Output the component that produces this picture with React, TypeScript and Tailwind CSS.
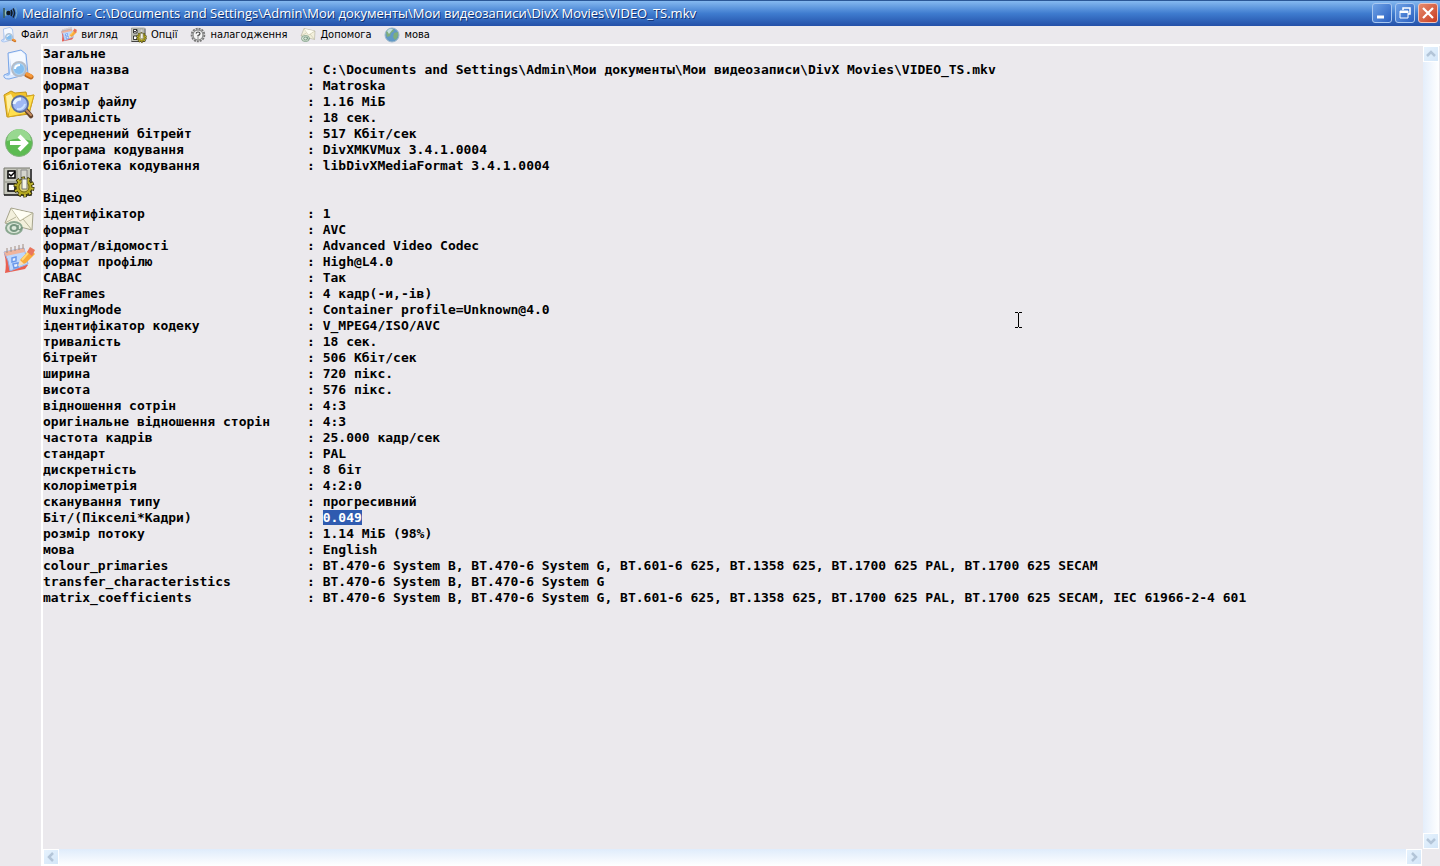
import type { ReactNode } from "react";

type Row = [label: string, value?: string];

const TITLE =
  "MediaInfo - C:\\Documents and Settings\\Admin\\Мои документы\\Мои видеозаписи\\DivX Movies\\VIDEO_TS.mkv";

const SELECTED = "Біт/(Пікселі*Кадри)";

const rows: Row[] = [
  ["Загальне"],
  ["повна назва", "C:\\Documents and Settings\\Admin\\Мои документы\\Мои видеозаписи\\DivX Movies\\VIDEO_TS.mkv"],
  ["формат", "Matroska"],
  ["розмір файлу", "1.16 МіБ"],
  ["тривалість", "18 сек."],
  ["усереднений бітрейт", "517 Кбіт/сек"],
  ["програма кодування", "DivXMKVMux 3.4.1.0004"],
  ["бібліотека кодування", "libDivXMediaFormat 3.4.1.0004"],
  [""],
  ["Відео"],
  ["ідентифікатор", "1"],
  ["формат", "AVC"],
  ["формат/відомості", "Advanced Video Codec"],
  ["формат профілю", "High@L4.0"],
  ["CABAC", "Так"],
  ["ReFrames", "4 кадр(-и,-ів)"],
  ["MuxingMode", "Container profile=Unknown@4.0"],
  ["ідентифікатор кодеку", "V_MPEG4/ISO/AVC"],
  ["тривалість", "18 сек."],
  ["бітрейт", "506 Кбіт/сек"],
  ["ширина", "720 пікс."],
  ["висота", "576 пікс."],
  ["відношення сотрін", "4:3"],
  ["оригінальне відношення сторін", "4:3"],
  ["частота кадрів", "25.000 кадр/сек"],
  ["стандарт", "PAL"],
  ["дискретність", "8 біт"],
  ["колоріметрія", "4:2:0"],
  ["сканування типу", "прогресивний"],
  [SELECTED, "0.049"],
  ["розмір потоку", "1.14 МіБ (98%)"],
  ["мова", "English"],
  ["colour_primaries", "BT.470-6 System B, BT.470-6 System G, BT.601-6 625, BT.1358 625, BT.1700 625 PAL, BT.1700 625 SECAM"],
  ["transfer_characteristics", "BT.470-6 System B, BT.470-6 System G"],
  ["matrix_coefficients", "BT.470-6 System B, BT.470-6 System G, BT.601-6 625, BT.1358 625, BT.1700 625 PAL, BT.1700 625 SECAM, IEC 61966-2-4 601"],
];

function FileIcon({ className }: { className: string }) {
  return (
    <svg viewBox="0 0 32 32" className={className} aria-hidden="true">
      <path d="M5 4 18 1l5 4 2 20-19 5Q0 30 1 26l5-2z" fill="#dceaff" stroke="#7ba6e6" />
      <path d="M6 5 18 2l4 4 1 17-15 3z" fill="#f5f9ff" />
      <path d="M2 26q4 2 5-1L8 9 6 25z" fill="#8fb8f2" />
      <path d="m24 26 4 2" stroke="#c06a1e" strokeWidth="5" strokeLinecap="round" />
      <path d="m24 25 4 2" stroke="#f6993a" strokeWidth="3.5" strokeLinecap="round" />
      <circle cx="16" cy="20" r="7" fill="#a9d3f6" stroke="#b4bcc8" strokeWidth="2" />
      <circle cx="16" cy="20" r="5" fill="#85bff0" />
      <path d="M12 20q0-4 5-4" stroke="#fff" strokeWidth="2" fill="none" />
    </svg>
  );
}

function FolderIcon({ className }: { className: string }) {
  return (
    <svg viewBox="0 0 32 32" className={className} aria-hidden="true">
      <path d="M1 7 8 3l4 2 11-1 1 4 7-1-5 19-22 3z" fill="#f2c32c" stroke="#c3951a" />
      <path d="m8 12 23-5-5 18-21 4z" fill="#ffe04e" stroke="#d6a722" />
      <path d="m3 8 5-2 2 4-5 16z" fill="#fff0a0" />
      <path d="m23 22 5 6" stroke="#65432c" strokeWidth="4.500" strokeLinecap="round" />
      <path d="m23 22 5 5" stroke="#c78f62" strokeWidth="2" strokeLinecap="round" />
      <circle cx="17" cy="16" r="8" fill="#9fb8f4" stroke="#5c709c" strokeWidth="1.8" />
      <path d="M11 16q1-5 7-5" stroke="#e8f3ff" strokeWidth="3" fill="none" />
      <path d="M14 21q6 1 8-5" stroke="#c9e0ff" strokeWidth="2" fill="none" />
    </svg>
  );
}

function ExportIcon({ className }: { className: string }) {
  return (
    <svg viewBox="0 0 32 32" className={className} aria-hidden="true">
      <circle cx="16" cy="16" r="13.5" fill="#5dbb52" stroke="#86b381" />
      <path d="M4 14a12 12 0 0 1 24 0q-12-5-24 0" fill="#98d890" />
      <path d="M7 16h15M16 9l7 7-7 7" stroke="#fff" strokeWidth="4" fill="none" />
    </svg>
  );
}

function OptionsIcon({ className }: { className: string }) {
  return (
    <svg viewBox="0 0 32 32" className={className} aria-hidden="true">
      <path d="M1 2h26v27H1z" fill="#c6c7bd" />
      <path d="M1 29V2h26" fill="none" stroke="#77786e" />
      <path d="M1 29h27V3" fill="none" stroke="#111" strokeWidth="1.5" />
      <path d="M14 3v25M2 16h24" stroke="#8b8c83" />
      <path d="M5 5h7v7H5zM5 18h7v7H5z" fill="#fff" stroke="#000" strokeWidth="1.5" />
      <path d="m6 8 2 2 4-4" fill="none" stroke="#000" strokeWidth="1.5" />
      <path d="M18 4h6v10h-6z" fill="#d5d5ce" stroke="#888" />
      <circle cx="21" cy="21" r="8.500" fill="none" stroke="#2d2900" strokeWidth="4" strokeDasharray="3.200 2.140" />
      <circle cx="21" cy="21" r="8" fill="#b4a820" stroke="#3d3700" />
      <circle cx="21" cy="21" r="8.500" fill="none" stroke="#c6bb36" strokeWidth="2.500" strokeDasharray="2 3.340" strokeDashoffset="-.6" />
      <circle cx="21" cy="21" r="5" fill="#ddd37a" stroke="#6d6310" />
      <path d="M19 13h5v10h-5z" fill="#f5f4e6" stroke="#777" />
    </svg>
  );
}

function MailIcon({ className }: { className: string }) {
  return (
    <svg viewBox="0 0 32 32" className={className} aria-hidden="true">
      <path d="m8 3 22 5-1 17L2 18z" fill="#f3f0dc" stroke="#a5a38c" />
      <path d="m8 3 9 13L30 8M2 18l11-6M29 25l-9-11" fill="none" stroke="#b9b69b" />
      <path d="m9 4 8 11 11-7z" fill="#fffef4" />
      <ellipse cx="11" cy="23" rx="8" ry="6" fill="#dce8da" stroke="#8aa790" strokeWidth="2" />
      <ellipse cx="11" cy="23" rx="3.5" ry="3" fill="none" stroke="#769680" strokeWidth="2" />
      <path d="M15 20v4q3 2 4-2" fill="none" stroke="#769680" strokeWidth="1.5" />
    </svg>
  );
}

function NotesIcon({ className }: { className: string }) {
  return (
    <svg viewBox="0 0 32 32" className={className} aria-hidden="true">
      <path d="M1 9q3 9 1 20l20-4 3-4z" fill="#ea5f50" />
      <path d="m1 8 20-4 4 16-18 7Q6 16 1 8" fill="#bfd8fc" stroke="#93b0e6" />
      <path d="m1 8 20-4 1 4L3 12z" fill="#f0b49c" />
      <path d="M4 4v5m4-6v5m4-6v5m4-6v5m4-6v5" stroke="#a08c80" />
      <path d="m9 14 4-1v4l-4 1zM10 20l5-1v4l-4 1z" fill="#e8f2ff" stroke="#6b98ea" strokeWidth="1.500" />
      <path d="m17 16 10-11 5 5-9 9-5 2z" fill="#f9aa3a" />
      <path d="m24 8 3-5 5 3-3 6z" fill="#e9745c" />
      <path d="m17 16 4 4-6 2z" fill="#f9dfb8" />
      <path d="m19 16 6-7" stroke="#ffd974" strokeWidth="2" />
    </svg>
  );
}

function HelpGearIcon({ className }: { className: string }) {
  return (
    <svg viewBox="0 0 16 16" className={className} aria-hidden="true">
      <circle cx="8" cy="8" r="6.4" fill="#d9d9d9" stroke="#777" strokeWidth="1.8" strokeDasharray="2 1" />
      <circle cx="8" cy="8" r="5" fill="#f4f4f4" stroke="#777" />
      <path d="M6 6.5Q6.500 5 8 5q2 0 2 1.500T8 8.500v1" fill="none" stroke="#444" strokeWidth="1.2" />
      <path d="M8 10.500v1" stroke="#444" strokeWidth="1.2" />
    </svg>
  );
}

function GlobeIcon({ className }: { className: string }) {
  return (
    <svg viewBox="0 0 16 16" className={className} aria-hidden="true">
      <circle cx="8" cy="8" r="7" fill="#6299c6" stroke="#9db9cc" />
      <path d="M2 5q3-4 7-3l1 2-3 2-1 3-3 1zM10 6l4-1q1 5-3 8l-2-3z" fill="#7fae7c" />
      <path d="M3 4q2-3 6-2L5 7z" fill="#d5ebf7" opacity=".8" />
    </svg>
  );
}

function SpeakerIcon() {
  return (
    <svg viewBox="0 0 16 16" className="size-4 shrink-0" fill="none" aria-hidden="true">
      <path d="M2 3v10" stroke="#3d6472" strokeWidth="2" />
      <circle cx="6.500" cy="8" r="2.200" fill="#101820" />
      <path d="M4 5q-1.500 3 0 6" stroke="#9fc7a8" />
      <path d="M9 5q2 3 0 6" stroke="#101820" strokeWidth="1.500" />
      <path d="M11 3.500q3 4.500 0 9" stroke="#16202c" strokeWidth="1.500" />
      <path d="M13.500 2.500q3 5.500 0 11" stroke="#7fb0c8" />
    </svg>
  );
}

const menu = [
  { label: "Файл", Icon: FileIcon },
  { label: "вигляд", Icon: NotesIcon },
  { label: "Опції", Icon: OptionsIcon },
  { label: "налагодження", Icon: HelpGearIcon },
  { label: "Допомога", Icon: MailIcon },
  { label: "мова", Icon: GlobeIcon },
];

const tools = [
  { label: "Відкрити файл", Icon: FileIcon },
  { label: "Відкрити теку", Icon: FolderIcon },
  { label: "Експорт", Icon: ExportIcon },
  { label: "Опції", Icon: OptionsIcon },
  { label: "Допомога", Icon: MailIcon },
  { label: "вигляд", Icon: NotesIcon },
];

function WindowButton({ label, close, children }: { label: string; close?: boolean; children: ReactNode }) {
  return (
    <button
      type="button"
      aria-label={label}
      className={`flex size-5 items-center justify-center rounded-[3px] border ${
        close
          ? "border-[#f0c4bc] bg-linear-to-br from-[#e58a6c] to-[#c8391c]"
          : "border-[#a9c8f0] bg-linear-to-br from-[#6fa2e6] to-[#2a5fc0]"
      }`}
    >
      <svg viewBox="0 0 18 18" className="size-[18px]" fill="none" stroke="#fff" aria-hidden="true">
        {children}
      </svg>
    </button>
  );
}

function ScrollButton({ label, d }: { label: string; d: string }) {
  return (
    <button
      type="button"
      disabled
      aria-label={label}
      className="flex size-4 shrink-0 items-center justify-center border border-white bg-linear-to-br from-[#e6f2fd] to-[#d3e6f8]"
    >
      <svg viewBox="0 0 14 14" className="size-3.5" fill="none" stroke="#b3c5d8" strokeWidth="2.5" aria-hidden="true">
        <path d={d} />
      </svg>
    </button>
  );
}

export default function App() {
  return (
    <div className="flex min-h-screen flex-col bg-[#ebe9ed] text-black">
      <header className="flex h-[26px] items-center gap-1 border-t border-[#2b5797] bg-linear-to-b from-[#85b9f0] via-[#3f7ccf] to-[#2450a8] pr-0.5 pb-0.5 pl-0.5">
        <SpeakerIcon />
        <h1 className="flex-1 truncate font-['Open_Sans','Noto_Sans',sans-serif] text-[13px] leading-5 font-medium text-white [text-shadow:1px_1px_0_#12306e]">
          {TITLE}
        </h1>
        <div className="flex gap-[3px]">
          <WindowButton label="Згорнути">
            <path d="M4 13h7" strokeWidth="3" />
          </WindowButton>
          <WindowButton label="Відновити">
            <path d="M7 6V4h7v6h-2" strokeWidth="1.500" />
            <path d="M4 7h8v7H4z" />
            <path d="M4 8h8" strokeWidth="2" />
          </WindowButton>
          <WindowButton label="Закрити" close>
            <path d="m4 4 10 10M14 4 4 14" strokeWidth="2.200" />
          </WindowButton>
        </div>
      </header>

      <nav className="flex h-[18px] items-center gap-[13px] pl-px font-['DejaVu_Sans_Condensed','DejaVu_Sans',sans-serif] text-[11px] leading-4">
        {menu.map(({ label, Icon }) => (
          <button key={label} type="button" className="flex items-center gap-1">
            <Icon className="size-4" />
            {label}
          </button>
        ))}
      </nav>

      <div className="flex flex-1">
        <aside className="flex w-[41px] shrink-0 flex-col pt-px pl-[3px]">
          {tools.map(({ label, Icon }) => (
            <button key={label} type="button" aria-label={label} className="flex h-[39px] items-center">
              <Icon className="size-8" />
            </button>
          ))}
        </aside>

        <main className="relative flex min-w-0 flex-1 flex-col border-t-2 border-l-2 border-white">
          <div className="flex flex-1">
            <div className="min-w-0 flex-1 overflow-hidden">
              <table className="font-['DejaVu_Sans_Mono','Liberation_Mono',monospace] text-[13px] leading-4 font-bold whitespace-pre">
                <tbody>
                  {rows.map(([label, value], i) => (
                    <tr key={i} className="h-4">
                      <th scope="row" className="w-[264px] p-0 text-left">
                        {label}
                      </th>
                      <td className="p-0">
                        {value && (
                          <>
                            {": "}
                            {label === SELECTED ? (
                              <mark className="bg-[#2f5bb0] text-white">{value}</mark>
                            ) : (
                              value
                            )}
                          </>
                        )}
                      </td>
                    </tr>
                  ))}
                </tbody>
              </table>
            </div>
            <div className="mr-px flex w-4 flex-col justify-between bg-linear-to-r from-[#e4eefb] to-white">
              <ScrollButton label="Вгору" d="m3 9 4-4 4 4" />
              <ScrollButton label="Вниз" d="m3 5 4 4 4-4" />
            </div>
          </div>
          <div className="mr-[18px] flex h-[17px] justify-between bg-linear-to-b from-[#dfecfb] to-white">
            <ScrollButton label="Ліворуч" d="M9 3 5 7l4 4" />
            <ScrollButton label="Праворуч" d="m5 3 4 4-4 4" />
          </div>

          {/* text cursor */}
          <svg
            viewBox="0 0 9 16"
            className="pointer-events-none absolute top-[266px] left-[971px] h-4 w-[9px]"
            fill="none"
            stroke="#000"
            aria-hidden="true"
          >
            <path d="M1 .5h3M5 .5h3M4.500 1v14M1 15.500h3M5 15.500h3" />
          </svg>
        </main>
      </div>
    </div>
  );
}
